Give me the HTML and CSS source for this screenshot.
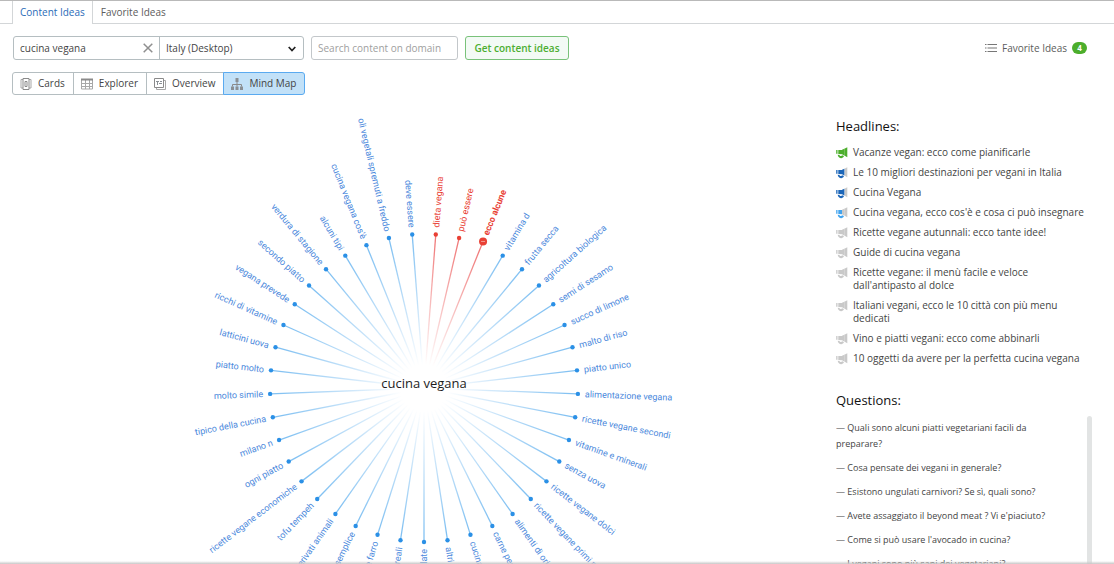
FILE: index.html
```html
<!DOCTYPE html>
<html lang="en">
<head>
<meta charset="utf-8">
<title>Content Ideas</title>
<link rel="stylesheet" href="styles.css">
</head>
<body>
<svg class="sprite" aria-hidden="true">
  <symbol id="horn" viewBox="0 0 12 12">
    <path class="horn-tip" d="M8.300 1.700L11.300.3v9.900L8.300 8.600z"/>
    <path class="horn-mid" d="M6 2.700L8.300 1.700v6.900L6 7.300z"/>
    <path class="horn-body" d="M.2 3.100h1.300v3.600H.2zM2.300 3H6v4.300L2.300 6.900zM1.700 7.700l1.800.2c.2 1.200 2.200 1.400 2.600.4l1.900.8c-1.100 3.300-5.900 2.600-6.300-1.400z"/>
  </symbol>
</svg>
<nav class="tabs">
  <a class="tab tab-active" href="#content">Content Ideas</a>
  <a class="tab" href="#favorites">Favorite Ideas</a>
</nav>
<header class="toolbar">
  <form class="search">
    <div class="combo">
      <label class="keyword"><input class="field" type="text" value="cucina vegana" aria-label="Topic"></label>
      <button class="clear" type="button" aria-label="Clear"><svg width="10" height="10" viewBox="0 0 10 10"><path d="M.7.700l8.600 8.600M9.300.700L.7 9.300"/></svg></button>
      <div class="region">
        <select class="select" aria-label="Database"><option>Italy (Desktop)</option></select>
        <svg class="chevron" width="8" height="6" viewBox="0 0 8 6"><path d="M.7 1L4 4.500 7.300 1"/></svg>
      </div>
    </div>
    <input class="field domain" type="text" placeholder="Search content on domain" aria-label="Search content on domain">
    <button class="submit" type="button">Get content ideas</button>
  </form>
  <a class="favorites" href="#favorites">
    <svg width="12" height="10" viewBox="0 0 12 10"><path d="M0 1.500h1.500M2.500 1.500H12M0 5h1.500M2.500 5H12M0 8.500h1.500M2.500 8.500H12"/></svg>
    Favorite Ideas <span class="badge">4</span>
  </a>
</header>
<div class="views">
  <button class="view" type="button"><svg width="12" height="12" viewBox="0 0 12 12"><path class="soft" d="M3 1.500H1v8.500h2M9 1.500h2v8.500H9"/><path d="M3 .5h6v11H3zM5 3.500h2v5H5z"/></svg>Cards</button>
  <button class="view" type="button"><svg width="12" height="12" viewBox="0 0 12 12"><path class="soft" d="M.5 1.500h11v9.500H.5zM.5 5.500h11M.5 8.500h11M4.500 1.500V11M8.500 1.500V11"/><path d="M0 1.500h12" stroke-width="2"/></svg>Explorer</button>
  <button class="view" type="button"><svg width="12" height="12" viewBox="0 0 12 12"><path class="soft" d="M2.500 9.500v2h9v-9h-2"/><path d="M.5.500h9v9h-9z"/><path class="solid" d="M2 3h3v1H2zM3 4h1v3H3zM6 3h2v1H6zM5 5h3v1H5z"/></svg>Overview</button>
  <button class="view view-active" type="button"><svg width="12" height="12" viewBox="0 0 12 12"><path class="solid" d="M4.500 0h3v4h-3zM0 8.500h3V12H0zM4.500 8.500h3V12h-3zM9 8.500h3V12H9z"/><path d="M6 4v4.500M1.500 8.500v-2h9v2"/></svg>Mind Map</button>
</div>
<main class="content">
  <section class="map-pane">
    <svg class="map" id="map" width="500" height="500" viewBox="-250 -284 500 500" role="img" aria-label="Mind map for cucina vegana">
      <defs>
        <radialGradient id="fade-blue" gradientUnits="userSpaceOnUse" cx="0" cy="0" r="154">
          <stop class="blue-stop" offset="0.150" stop-opacity="0"/><stop class="blue-stop" offset="0.950" stop-opacity="1"/>
        </radialGradient>
        <radialGradient id="fade-red" gradientUnits="userSpaceOnUse" cx="0" cy="0" r="154">
          <stop class="red-stop" offset="0.150" stop-opacity="0"/><stop class="red-stop" offset="0.950" stop-opacity="1"/>
        </radialGradient>
      </defs>
    </svg>
  </section>
  <aside class="side">
    <h2 class="title">Headlines:</h2>
    <ul class="headlines">
      <li class="headline green"><svg class="horn"><use href="#horn"/></svg>Vacanze vegan: ecco come pianificarle</li>
      <li class="headline blue"><svg class="horn"><use href="#horn"/></svg>Le 10 migliori destinazioni per vegani in Italia</li>
      <li class="headline blue"><svg class="horn"><use href="#horn"/></svg>Cucina Vegana</li>
      <li class="headline sky"><svg class="horn"><use href="#horn"/></svg>Cucina vegana, ecco cos'è e cosa ci può insegnare</li>
      <li class="headline"><svg class="horn"><use href="#horn"/></svg>Ricette vegane autunnali: ecco tante idee!</li>
      <li class="headline"><svg class="horn"><use href="#horn"/></svg>Guide di cucina vegana</li>
      <li class="headline"><svg class="horn"><use href="#horn"/></svg>Ricette vegane: il menù facile e veloce dall'antipasto al dolce</li>
      <li class="headline"><svg class="horn"><use href="#horn"/></svg>Italiani vegani, ecco le 10 città con più menu dedicati</li>
      <li class="headline"><svg class="horn"><use href="#horn"/></svg>Vino e piatti vegani: ecco come abbinarli</li>
      <li class="headline"><svg class="horn"><use href="#horn"/></svg>10 oggetti da avere per la perfetta cucina vegana</li>
    </ul>
    <h2 class="title">Questions:</h2>
    <div class="questions">
      <ul class="question-list">
        <li>— Quali sono alcuni piatti vegetariani facili da preparare?</li>
        <li>— Cosa pensate dei vegani in generale?</li>
        <li>— Esistono ungulati carnivori? Se sì, quali sono?</li>
        <li>— Avete assaggiato il beyond meat ? Vi e'piaciuto?</li>
        <li>— Come si può usare l'avocado in cucina?</li>
        <li>— I vegani sono più sani dei vegetariani?</li>
      </ul>
      <div class="scrollbar"></div>
    </div>
  </aside>
</main>
<script src="map.js"></script>
</body>
</html>
```
FILE: styles.css
```css
* { box-sizing: border-box; }
body {
  margin: 0;
  height: 100vh;
  overflow: hidden;
  display: flex;
  flex-direction: column;
  border-top: 1px solid #b9b9b9;
  background: #fff;
  color: #444;
  font: 10px/13px "Open Sans", "Noto Sans", sans-serif;
}
body::after {
  content: "";
  position: fixed;
  inset: auto 0 0;
  height: 3px;
  background: linear-gradient(rgba(190, 190, 190, 0), #c8c8c8);
}
button, input, select { font: inherit; color: inherit; }
ul { margin: 0; padding: 0; list-style: none; }
a { color: inherit; text-decoration: none; }
.sprite { position: absolute; width: 0; height: 0; }

.tabs { display: flex; height: 23px; padding-left: 12px; border-bottom: 1px solid #d3d6d8; flex: none; }
.tab { height: 23px; padding: 5px 8px; color: #5c5c5c; }
.tab-active { padding: 5px 7px; color: #2a6bb8; background: #fff; border: solid #d3d6d8; border-width: 0 1px; }

.toolbar { display: flex; justify-content: space-between; align-items: center; padding: 12px 27px 12px 13px; flex: none; }
.search { display: flex; gap: 7px; }
.combo { display: flex; width: 291px; height: 24px; border: 1px solid #b5bec1; border-radius: 3px; }
.field { width: 100%; height: 22px; padding: 0 6px; border: 0; background: none; outline: 0; }
.field::placeholder { color: #a0a0a0; opacity: 1; }
.keyword { flex: 1; }
.clear { width: 22px; padding: 0; border: 0; background: none; display: grid; place-items: center; }
.clear path { stroke: #8f8f8f; stroke-width: 1.500; fill: none; }
.region { position: relative; width: 144px; border-left: 1px solid #b5bec1; }
.select { width: 100%; height: 22px; padding: 0 6px; border: 0; appearance: none; background: none; }
.chevron { position: absolute; right: 7px; top: 9px; pointer-events: none; }
.chevron path { stroke: #222; stroke-width: 1.700; fill: none; }
.domain { width: 147px; height: 24px; border: 1px solid #c3c7ca; border-radius: 3px; }
.submit { width: 104px; height: 24px; padding: 0; border: 1px solid #79c27a; border-radius: 3px; background: #f3faf5; color: #4cae31; font-weight: 600; }
.favorites { display: flex; align-items: center; gap: 5px; color: #5c5c5c; }
.favorites path { stroke: #777; stroke-width: 1.200; }
.badge { width: 15px; height: 12px; border-radius: 6px; background: #4cae2c; color: #fff; font-size: 8px; line-height: 12px; font-weight: 700; text-align: center; }

.views { display: flex; padding-left: 12px; flex: none; }
.view { display: flex; align-items: center; justify-content: center; gap: 6px; height: 23px; padding: 0 8px 0 7px; margin-right: -1px; border: 1px solid #b5bec1; background: #fff; }
.view:first-child { border-radius: 3px 0 0 3px; }
.view svg { fill: none; stroke: #8a8a8a; stroke-width: 1; }
.view .soft { stroke: #a8a8a8; }
.view .solid { fill: #8a8f94; stroke: none; }
.view-active { border-color: #5aaaf0; border-radius: 0 3px 3px 0; background: #c2e1f8; }

.content { flex: 1; min-height: 0; display: flex; padding: 9px 22px 0 12px; }
.map-pane { flex: 1; display: flex; justify-content: center; align-items: flex-start; overflow: hidden; }
.map { flex: none; overflow: visible; }
.map text { font-family: Roboto, "Open Sans", sans-serif; font-size: 9px; fill: #4a88dc; }
.map .root { font-family: "Open Sans", sans-serif; font-size: 13px; fill: #1c1c1c; text-anchor: middle; }
.map .before { text-anchor: end; }
.map circle { fill: #2b90e6; }
.map .link { stroke: url(#fade-blue); stroke-width: 1.300; }
.blue-stop { stop-color: #82c1f2; }
.red-stop { stop-color: #f07a7a; }
.map .hot text, .map .hot circle { fill: #e94034; }
.map .hot .link { stroke: url(#fade-red); }
.map .chosen text { font-weight: 700; }
.map .dash { stroke: #f39a91; stroke-width: 1; }

.side { padding-top: 13px; display: flex; flex-direction: column; flex: 0 0 256px; }
.title { margin: 0 0 11px; font-size: 13px; line-height: 18px; font-weight: 400; color: #111; }
.headlines { display: flex; flex-direction: column; gap: 7px; margin-bottom: 26px; }
.headline { display: flex; gap: 5px; padding-right: 8px; }
.horn { width: 12px; height: 12px; margin-top: 1px; flex: none; }
.horn-body { fill: var(--body, #c9c9c9); }
.horn-mid { fill: var(--mid, #c9c9c9); }
.horn-tip { fill: var(--tip, #c9c9c9); }
.green { --body: #4cae2c; --mid: #4cae2c; --tip: #4cae2c; }
.blue { --body: #1c66b8; --mid: #1c66b8; }
.sky { --body: #42a4ee; }
.questions { flex: 1; min-height: 0; display: flex; justify-content: space-between; margin-top: -4px; overflow: hidden; }
.question-list { display: flex; flex-direction: column; gap: 8px; padding-top: 4px; width: 224px; font-size: 9px; line-height: 16px; }
.scrollbar { width: 5px; border-radius: 3px 3px 0 0; background: #e2e4e4; }
```
FILE: map.js
```js
const RADIUS = 154;
const topics = [
  "altri ortaggi", "cucina italiana", "carne per vegani", "alimenti di origine", "ricette vegane primi piatti",
  "ricette vegane dolci", "senza uova", "vitamine e minerali", "ricette vegane secondi",
  "alimentazione vegana", "piatto unico", "malto di riso", "succo di limone", "semi di sesamo",
  "agricoltura biologica", "frutta secca", "vitamina d", "ecco alcune", "può essere", "dieta vegana",
  "deve essere", "oli vegetali spremuti a freddo", "cucina vegana cos'è", "alcuni tipi",
  "verdura di stagione", "secondo piatto", "vegana prevede", "ricchi di vitamine", "latticini uova",
  "piatto molto", "molto simile", "tipico della cucina", "milano n", "ogni piatto",
  "ricette vegane economiche", "tofu tempeh", "derivati animali", "semplice", "e farro", "cereali",
  "insalate"
];
const hot = ["ecco alcune", "può essere", "dieta vegana"];
const chosen = "ecco alcune";
const map = document.getElementById("map");

function add(parent, name, attrs, text) {
  const el = document.createElementNS("http://www.w3.org/2000/svg", name);
  for (const key in attrs) el.setAttribute(key, attrs[key]);
  if (text) el.textContent = text;
  parent.appendChild(el);
  return el;
}

topics.forEach((topic, i) => {
  const turn = (i + 1) * 360 / topics.length;
  const rad = turn * Math.PI / 180;
  const isChosen = topic === chosen;
  const reach = isChosen ? RADIUS + 4 : RADIUS;
  const x = reach * Math.sin(rad);
  const y = reach * Math.cos(rad);
  const before = turn > 180;
  const node = add(map, "g", { class: (hot.includes(topic) ? "hot " : "") + (isChosen ? "chosen" : "") });
  add(node, "line", { class: "link", x1: 0, y1: 0, x2: x, y2: y });
  add(node, "circle", { cx: x, cy: y, r: isChosen ? 4 : 2.2 });
  if (isChosen) add(node, "line", { class: "dash", x1: x - 2, x2: x + 2, y1: y, y2: y });
  add(node, "text", {
    class: before ? "before" : "after",
    x: before ? -7 : 7,
    y: 3,
    transform: `translate(${x} ${y}) rotate(${before ? 270 - turn : 90 - turn})`
  }, topic);
});
add(map, "text", { class: "root", x: 0, y: 0 }, "cucina vegana");
```
